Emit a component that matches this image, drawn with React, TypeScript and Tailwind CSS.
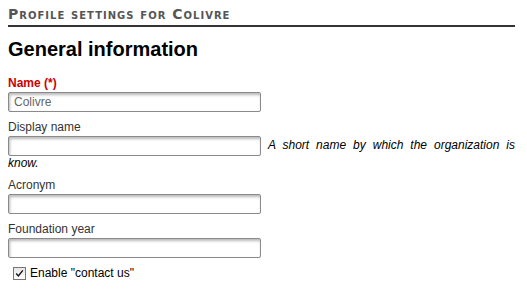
import React from 'react'

type FieldProps = {
  label: string
  value?: string
  required?: boolean
}

function TextInput({ value = '' }: { value?: string }) {
  return (
    <input
      type="text"
      defaultValue={value}
      className="inline-block h-[20px] w-[253px] rounded-[2px] border border-[#8a8a8a] bg-white px-[5px] align-middle text-[12px] text-[#666] shadow-[inset_1px_2px_3px_rgba(0,0,0,0.28)] outline-none"
      style={{ fontFamily: '"Liberation Sans", Arial, sans-serif' }}
    />
  )
}

function Field({ label, value, required }: FieldProps) {
  return (
    <div className="mb-[8px]">
      <label
        className={`block leading-[14px] mb-[2px] ${
          required ? 'font-bold text-[#cc0000]' : 'text-[#333]'
        }`}
      >
        {label}
      </label>
      <TextInput value={value} />
    </div>
  )
}

export default function App() {
  return (
    <div
      className="w-[527px] h-[290px] bg-white px-[8px] text-[12px] text-black overflow-hidden"
      style={{ fontFamily: '"Liberation Sans", Arial, sans-serif' }}
    >
      <div className="w-[507px]">
        <h1
          className="mt-[6px] pb-[2px] border-b-2 border-[#333] text-[14px] leading-[17px] font-bold tracking-[1px] text-[#555] [font-variant:small-caps]"
          style={{ fontFamily: '"DejaVu Sans", Verdana, sans-serif' }}
        >
          Profile settings for Colivre
        </h1>

        <h2 className="mt-[10px] mb-[15px] text-[20px] leading-[24px] font-bold text-black">
          General information
        </h2>

        <Field label="Name (*)" value="Colivre" required />

        <div className="mb-[8px]">
          <label className="block leading-[14px] mb-[2px] text-[#333]">Display name</label>
          <div className="text-justify leading-[14px]">
            <TextInput />{' '}
            <span className="italic">A short name by which the organization is know.</span>
          </div>
        </div>

        <Field label="Acronym" />
        <Field label="Foundation year" />

        <label className="flex items-center gap-[4px] pl-[5px] leading-[14px] text-black">
          <span className="flex h-[13px] w-[13px] items-center justify-center border border-[#777] bg-gradient-to-b from-[#e6e6e6] to-[#fff]">
            <svg width="11" height="11" viewBox="0 0 11 11">
              <path d="M2.2 5.6 L4.4 7.9 L8.8 2.4" fill="none" stroke="#111" strokeWidth="1.4" />
            </svg>
          </span>
          Enable "contact us"
        </label>
      </div>
    </div>
  )
}
